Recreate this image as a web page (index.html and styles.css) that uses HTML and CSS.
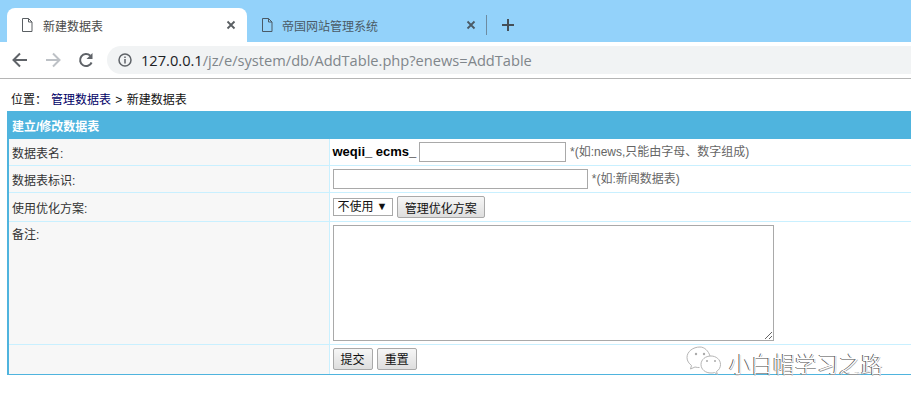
FILE: index.html
```html
<!DOCTYPE html>
<html>
<head>
<meta charset="utf-8">
<title>新建数据表</title>
<link rel="stylesheet" href="styles.css">
</head>
<body>

<div class="tabstrip">
	<div class="tab tabActive">
		<svg class="tabIcon" width="12" height="14" viewBox="0 0 12 14"><path d="M1.500 .5h6l3.500 3.500v9.500h-9.500z M7.500 .5v3.500h3.500" fill="none" stroke="#5a5f63"/></svg>
		<span class="tabTitle">新建数据表</span>
		<svg class="tabClose" width="10" height="10" viewBox="0 0 10 10"><path d="M1.500 1.500l7 7M8.500 1.500l-7 7" stroke="#5a5f63" stroke-width="1.800"/></svg>
	</div>
	<div class="tab">
		<svg class="tabIcon" width="12" height="14" viewBox="0 0 12 14"><path d="M1.500 .5h6l3.500 3.500v9.500h-9.500z M7.500 .5v3.500h3.500" fill="none" stroke="#4a5a66"/></svg>
		<span class="tabTitle tabTitleDim">帝国网站管理系统</span>
		<svg class="tabClose" width="10" height="10" viewBox="0 0 10 10"><path d="M1.500 1.500l7 7M8.500 1.500l-7 7" stroke="#4a5a66" stroke-width="1.800"/></svg>
	</div>
	<div class="tabSep"></div>
	<svg class="newTab" width="12" height="12" viewBox="0 0 12 12"><path d="M6 0v12M0 6h12" stroke="#454f57" stroke-width="2"/></svg>
</div>

<div class="toolbar">
	<svg class="navIcon" width="16" height="16" viewBox="0 0 16 16"><path d="M15 8H2M8 1.500L1.500 8 8 14.500" fill="none" stroke="#5f6368" stroke-width="2"/></svg>
	<svg class="navIcon" width="16" height="16" viewBox="0 0 16 16"><path d="M1 8h13M8 1.500L14.500 8 8 14.500" fill="none" stroke="#bdc1c6" stroke-width="2"/></svg>
	<svg class="navIcon" width="16" height="16" viewBox="0 0 16 16"><path d="M13.600 10.500A6 6 0 1 1 12.300 3.800" fill="none" stroke="#5f6368" stroke-width="2"/><path d="M14.500 1v6h-6z" fill="#5f6368"/></svg>
	<div class="addressBar">
		<svg width="14" height="14" viewBox="0 0 14 14"><circle cx="7" cy="7" r="6" fill="none" stroke="#5f6368" stroke-width="1.500"/><path d="M7 6v4.500M7 3.500v1.500" stroke="#5f6368" stroke-width="1.500"/></svg>
		<span class="url"><span class="urlHost">127.0.0.1</span>/jz/e/system/db/AddTable.php?enews=AddTable</span>
	</div>
</div>

<div class="page">
	<div class="crumbs">位置：<a href="#">管理数据表</a> &gt; 新建数据表</div>

	<form>
	<table class="formTable">
		<colgroup><col class="colLabel"><col></colgroup>
		<tr class="headRow">
			<td colspan="2">建立/修改数据表</td>
		</tr>
		<tr class="rowName">
			<td class="label">数据表名:</td>
			<td class="field"><b class="prefix">weqii_ ecms_</b> <input type="text" class="inName"> <span class="hint">*(如:news,只能由字母、数字组成)</span></td>
		</tr>
		<tr class="rowName">
			<td class="label">数据表标识:</td>
			<td class="field"><input type="text" class="inMark"> <span class="hint">*(如:新闻数据表)</span></td>
		</tr>
		<tr class="rowPlan">
			<td class="label">使用优化方案:</td>
			<td class="field"><span class="selectWrap"><select class="planSelect"><option>不使用</option></select></span> <button type="button" class="btn">管理优化方案</button></td>
		</tr>
		<tr class="rowNote">
			<td class="label">备注:</td>
			<td class="field"><textarea class="noteArea"></textarea></td>
		</tr>
		<tr class="rowSubmit">
			<td class="label"></td>
			<td class="field"><button type="button" class="btn">提交</button> <button type="button" class="btn">重置</button></td>
		</tr>
	</table>
	</form>
</div>

<div class="watermark">
	<svg width="36" height="32" viewBox="0 0 36 32">
		<path d="M14 1C7 1 1 5.500 1 11.500c0 3.500 2 6 4.500 8L4.500 23l4.500-2c1.500.5 3 .5 4.500.5M24 10C22.500 5 18.500 1 14 1" fill="#fff" stroke="#b5b5b5"/>
		<path d="M25 10c-5.500 0-10 3.500-10 8.500S19.500 27 25 27c1.500 0 2.500 0 3.500-.5l3 2-1-3c2.500-1.500 4-4 4-7 0-5-4.500-8.500-9.500-8.500z" fill="#fff" stroke="#b5b5b5"/>
		<circle cx="10" cy="8" r="1.200" fill="#aaa"/><circle cx="18" cy="8" r="1.200" fill="#aaa"/>
		<circle cx="21" cy="15" r="1" fill="#aaa"/><circle cx="29" cy="15" r="1" fill="#aaa"/>
	</svg>
	<span class="markText">小白帽学习之路</span>
</div>

</body>
</html>
```

FILE: styles.css
```css
html, body {
	margin: 0;
	height: 403px;
	overflow: hidden;
	background-color: white;
}
body {
	position: relative;
	font-family: "Liberation Sans", "Noto Sans CJK SC", sans-serif;
	font-size: 12px;
	color: #111;
}
.tabstrip {
	display: flex;
	align-items: center;
	height: 42px;
	background-color: #93d2fa;
	padding-left: 7px;
	box-sizing: border-box;
}
.tab {
	display: flex;
	align-items: center;
	align-self: flex-end;
	width: 240px;
	height: 34px;
	box-sizing: border-box;
	padding: 0 11px 0 14px;
	flex-shrink: 0;
}
.tabActive {
	background-color: white;
	border-radius: 8px 8px 0 0;
}
.tabIcon {
	margin-right: 10px;
}
.tabTitle {
	flex: 1;
	font-size: 12px;
	color: #4a4a4a;
}
.tabTitleDim {
	margin-left: -1px;
	color: #4a5a66;
}
.tabSep {
	width: 1px;
	height: 20px;
	margin-left: -1px;
	margin-top: 8px;
	background-color: #6d8ba0;
}
.newTab {
	margin: 8px 0 0 15px;
}
.toolbar {
	display: flex;
	align-items: center;
	height: 36px;
	border-bottom: 1px solid #b5b5b5;
	padding-left: 12px;
}
.navIcon {
	margin-right: 17px;
}
.navIcon:nth-child(3) {
	margin-right: 13px;
}
.addressBar {
	display: flex;
	align-items: center;
	flex: 1;
	height: 28px;
	padding-left: 11px;
	background-color: #f1f3f4;
	border-radius: 14px 0 0 14px;
}
.url {
	margin-left: 9px;
	font-family: "Open Sans", "Liberation Sans", sans-serif;
	font-size: 14.63px;
	color: #80868b;
}
.urlHost {
	color: #202124;
}
.page {
	padding: 0 0 0 7px;
}
.crumbs {
	height: 32px;
	box-sizing: border-box;
	padding: 14px 0 0 4px;
	line-height: 14px;
	word-spacing: 1px;
}
.crumbs a {
	margin-left: 4px;
	color: #000066;
	text-decoration: none;
}
.formTable {
	width: 940px;
	border-collapse: collapse;
	border: 1px solid #4fb4de;
	border-width: 1px 0 1px 2px;
	table-layout: fixed;
}
.colLabel {
	width: 321px;
}
.formTable td {
	padding: 0 3px;
	border: 1px solid #c9f0ff;
	vertical-align: middle;
}
.formTable td:first-child {
	border-left-color: #4fb4de;
}
.headRow td {
	height: 26px;
	padding: 0 3px;
	background-color: #4fb4de;
	border-color: #4fb4de;
	color: white;
	font-weight: bold;
}
.label {
	background-color: #f7f7f7;
	color: #333;
}
.field {
	background-color: white;
}
.rowName td {
	height: 26px;
}
.rowPlan td {
	height: 28px;
}
.rowNote td {
	height: 119px;
}
.rowNote .label {
	vertical-align: top;
	padding-top: 3px;
}
.rowSubmit td {
	height: 27px;
	border-bottom-color: #4fb4de;
}
.rowSubmit .field {
	padding-bottom: 2px;
}
.prefix {
	font-size: 13px;
	color: #000;
}
.hint {
	margin-left: 1px;
	color: #666;
}
input, select, textarea {
	font-family: "Liberation Sans", "Noto Sans CJK SC", sans-serif;
	font-size: 12px;
	border: 1px solid #a9a9a9;
	background-color: white;
	box-sizing: border-box;
	margin: 0;
	vertical-align: middle;
}
.inName {
	width: 147px;
	height: 20px;
	margin-left: -1px;
}
.inMark {
	width: 255px;
	height: 20px;
}
.selectWrap {
	position: relative;
	display: inline-block;
	vertical-align: middle;
	margin-right: 1px;
	line-height: 0;
}
.selectWrap::after {
	content: "▼";
	position: absolute;
	right: 5px;
	top: 8px;
	font-size: 11px;
	line-height: 0;
	color: #111;
	pointer-events: none;
}
.planSelect {
	appearance: none;
	width: 60px;
	height: 18px;
	padding: 0 0 0 4px;
	border-radius: 0;
	color: #111;
}
.noteArea {
	display: block;
	width: 441px;
	height: 116px;
}
.btn {
	height: 22px;
	min-width: 40px;
	padding: 0 7px;
	margin: 0;
	font-family: "Liberation Sans", "Noto Sans CJK SC", sans-serif;
	font-size: 12px;
	color: #111;
	border: 1px solid #a9a9a9;
	border-radius: 2px;
	background: linear-gradient(#f6f6f6, #dedede);
	vertical-align: middle;
}
.btn + .btn {
	margin-left: 1px;
}
.watermark {
	position: absolute;
	left: 686px;
	top: 346px;
	display: flex;
	align-items: center;
}
.markText {
	margin-left: 7px;
	font-size: 22px;
	font-weight: 300;
	color: white;
	text-shadow: -1px 0 #555, 0 1px #999;
}
```
